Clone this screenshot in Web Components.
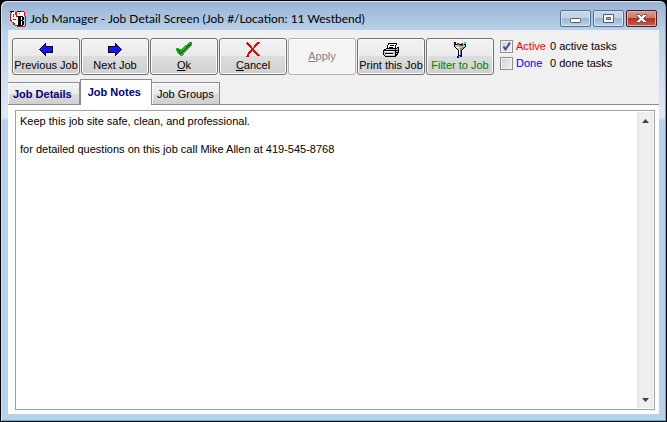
<!DOCTYPE html>
<html lang="en">
<head>
<meta charset="utf-8">
<title>Job Manager</title>
<style>
    body {
        margin: 0;
        background: #000;
        font: 11px/14px "Liberation Sans", Arial, sans-serif;
        color: #000;
    }
    .red { color: #f00; }
    .blue { color: #00f; }
    .green { color: #008000; }
</style>
</head>
<body>
<app-window>
    <svg slot="icon" width="16" height="16" viewBox="0 0 16 16" shape-rendering="crispEdges" aria-hidden="true">
        <path fill="#fff" d="M1 1h13v14H5V12H1z"/>
        <path fill="#f00000" d="M0 2h1v8H0zM1 9h1v2H1zM2 11h2v1H2zM3 12h2v2H3zM5 14h3v1H5zM7 15h8v1H7zM15 5h1v10h-1zM11 0h3v1h-3zM14 1h1v4h-1zM5 1h2v3H5zM3 3h1v3H3zM6 4h1v2H6zM9 2h1v1H9zM3 8h3v1H3z"/>
        <path fill="#000" d="M0 0h4v1H0zM1 1h1v1H1zM7 0h4v1H7z"/>
        <path fill="#000" fill-rule="evenodd" d="M7 5h6v1h1v3h-1v1h1v4h-1v1H7v-1h1V6H7zM11 6v3h1V6zM11 10v4h1v-4z"/>
    </svg>
    <span slot="title">Job Manager - Job Detail Screen (Job #/Location: 11 Westbend)</span>

    <job-toolbar>
        <tool-button>
            <svg slot="icon" width="16" height="16" viewBox="0 0 16 16" shape-rendering="crispEdges">
                <path fill="#1414ff" stroke="#000" d="M1.5 7.5L7.5 1.5V4.5H14.5V10.5H7.5V13.5z"/>
            </svg>
            Previous Job
        </tool-button>
        <tool-button>
            <svg slot="icon" width="16" height="16" viewBox="0 0 16 16" shape-rendering="crispEdges">
                <path fill="#1414ff" stroke="#000" d="M14.5 7.5L8.5 1.5V4.5H1.5V10.5H8.5V13.5z"/>
            </svg>
            Next Job
        </tool-button>
        <tool-button>
            <svg slot="icon" width="16" height="16" viewBox="0 0 16 16" shape-rendering="crispEdges">
                <path fill="#808080" d="M2 9L5 7L14 0H16V3L8 12L6 14H4L2 12z"/>
                <path fill="#008000" d="M0 6H3L5 9L12 1L15 0V2L6 12H3L1 9z"/>
                <path fill="none" stroke="#00d800" d="M3.5 12.5L.5 8.5V6.5H2.5L5.5 9.5L11.5 2.5L14.5 .5"/>
            </svg>
            <u>O</u>k
        </tool-button>
        <tool-button>
            <svg slot="icon" width="16" height="16" viewBox="0 0 16 16" shape-rendering="crispEdges">
                <path fill="none" stroke="#f00000" stroke-width="2" d="M2 1L5 4L8 8L12 12L14 14M14 0L11 3L7 8L4 11L2 15"/>
                <path fill="#f00000" d="M1 1h3v1H1zM2 13h2v2H2zM13 13h2v1h-2z"/>
            </svg>
            <u>C</u>ancel
        </tool-button>
        <tool-button disabled><u>A</u>pply</tool-button>
        <tool-button>
            <svg slot="icon" width="16" height="16" viewBox="0 0 16 16" shape-rendering="crispEdges">
                <path fill="#fff" stroke="#000" d="M5.5 1.5H13.5L11.5 7.5H3.5z"/>
                <path fill="#000" d="M7 3h4v1H7zM6 5h4v1H6z"/>
                <path fill="#c0c0c0" stroke="#000" d="M.5 8.5L3.5 6.5H12.5L15.5 5.5V10.5L12.5 14.5H2.5L.5 12.5z"/>
                <path fill="#000" d="M1 8h11v1H1zM12 7h1v7h-1zM2 11h8v1H2zM13 8h2v1h-2zM13 10h2v1h-2z"/>
                <path fill="#fff" d="M2 9h9v1H2zM3 12h8v1H3z"/>
            </svg>
            Print this Job
        </tool-button>
        <tool-button>
            <svg slot="icon" width="16" height="16" viewBox="0 0 16 16" shape-rendering="crispEdges">
                <path fill="#c0c0c0" stroke="#000" d="M2.5 2.5H13.5V4.5L9.5 8.5V13.5H6.5V8.5L2.5 4.5z"/>
                <path fill="#fff" d="M4 5h3v1H4zM7 7h1v6H7z"/>
                <path fill="#808080" d="M10 5h2v1h-2zM8 6h2v2H8zM8 8h1v5H8z"/>
                <path fill="#f00" d="M5 1h2v2H5zM9 3h2v1H9z"/>
                <path fill="#00c000" d="M7 3h2v1H7zM9 1h2v1H9z"/>
                <path fill="#ffe000" d="M4 3h1v1H4zM11 2h1v1h-1z"/>
                <path fill="#0000e0" d="M2 0h2v2H2zM8 13h2v2H8zM5 14h2v2H5z"/>
                <path fill="#00e0f0" d="M12 0h2v2h-2z"/>
            </svg>
            <span class="green">Filter to Job</span>
        </tool-button>
        <task-filter slot="filters" checked>
            <span slot="label" class="red">Active</span>0 active tasks
        </task-filter>
        <task-filter slot="filters">
            <span slot="label" class="blue">Done</span>0 done tasks
        </task-filter>
    </job-toolbar>

    <job-tabs>
        <job-tab slot="tabs" filled>Job Details</job-tab>
        <job-tab slot="tabs" filled selected>Job Notes</job-tab>
        <job-tab slot="tabs">Job Groups</job-tab>
        <job-notes>Keep this job site safe, clean, and professional.

for detailed questions on this job call Mike Allen at 419-545-8768</job-notes>
    </job-tabs>
</app-window>

<script>
class AppWindow extends HTMLElement {
    constructor() {
        super();
        this.attachShadow({ mode: 'open' });
        this.shadowRoot.innerHTML = `
            <style>
                :host {
                    display: flex;
                    flex-direction: column;
                    box-sizing: border-box;
                    min-height: 100vh;
                    padding: 1px 7px 7px;
                    border: 1px solid #000;
                    border-radius: 7px 7px 0 0;
                    box-shadow: inset 1px 1px #d4e2f2, inset -1px -1px #2fc8e0;
                    background: linear-gradient(#98b3d3, #b9d1ea 30px, #dfeaf6 116px, #b9d1ea 120px);
                }
                header {
                    display: flex;
                    align-items: center;
                    height: 28px;
                    gap: 4px;
                }
                .title {
                    display: flex;
                    align-items: center;
                    flex: 1;
                    gap: 4px;
                    padding: 5px 0 0 2px;
                    font: 12px/16px Lato, "Open Sans", sans-serif;
                    white-space: nowrap;
                }
                h1 {
                    margin: 0;
                    font: inherit;
                }
                .controls {
                    display: flex;
                    gap: 2px;
                    padding: 5px 2px 0 0;
                }
                button {
                    display: grid;
                    place-items: center;
                    width: 31px;
                    height: 17px;
                    padding: 0;
                    border: 1px solid #55708f;
                    border-radius: 2px;
                    box-shadow: inset 0 0 0 1px #d5e3f2;
                    background: linear-gradient(#c2d4e9 50%, #9db7d4 50%, #b9d0ea);
                }
                .close {
                    border-color: #501a22;
                    box-shadow: inset 0 0 0 1px #e5aaa0;
                    background: linear-gradient(#dc9a8e, #cf7565 50%, #b6301c 50%, #cc5a42);
                }
                main {
                    display: flex;
                    flex-direction: column;
                    flex: 1;
                    background: #f0f0f0;
                }
            </style>
            <header>
                <div class="title"><slot name="icon"></slot><h1><slot name="title"></slot></h1></div>
                <div class="controls">
                    <button type="button" aria-label="Minimize">
                        <svg width="13" height="11" viewBox="0 0 13 11"><rect x="1.5" y="5.5" width="10" height="4" rx="1" fill="#fff" stroke="#565a68"/></svg>
                    </button>
                    <button type="button" aria-label="Maximize">
                        <svg width="13" height="11" viewBox="0 0 13 11"><path fill="#fff" fill-rule="evenodd" stroke="#565a68" d="M1.5 1.5h10v8h-10zM4.5 4.5h4v2h-4z"/></svg>
                    </button>
                    <button type="button" class="close" aria-label="Close">
                        <svg width="13" height="11" viewBox="0 0 13 11"><path fill="#fff" stroke="#565a68" d="M1.5 1.5H4.5L6.5 3.5L8.5 1.5H11.5V2.5L8.5 5.5L11.5 8.5V9.5H8.5L6.5 7.5L4.5 9.5H1.5V8.5L4.5 5.5L1.5 2.5z"/></svg>
                    </button>
                </div>
            </header>
            <main><slot></slot></main>
        `;
    }
}

class JobToolbar extends HTMLElement {
    constructor() {
        super();
        this.attachShadow({ mode: 'open' });
        this.shadowRoot.innerHTML = `
            <style>
                :host {
                    display: flex;
                    gap: 6px;
                    padding: 8px 4px 4px;
                }
                .buttons {
                    display: flex;
                    gap: 1px;
                }
                .filters {
                    display: flex;
                    flex-direction: column;
                    gap: 3px;
                    padding-top: 1px;
                }
            </style>
            <div class="buttons"><slot></slot></div>
            <div class="filters"><slot name="filters"></slot></div>
        `;
    }
}

class ToolButton extends HTMLElement {
    constructor() {
        super();
        this.attachShadow({ mode: 'open' });
        this.shadowRoot.innerHTML = `
            <style>
                :host { display: block; }
                button {
                    display: flex;
                    flex-direction: column;
                    align-items: center;
                    justify-content: center;
                    width: 68px;
                    height: 37px;
                    padding: 1px 0 0;
                    border: 1px solid #707070;
                    border-radius: 3px;
                    box-shadow: inset 0 0 0 1px #fbfbfb;
                    background: linear-gradient(#f2f2f2, #ebebeb 50%, #dddddd 50%, #cfcfcf);
                    font: inherit;
                    color: #000;
                    white-space: nowrap;
                }
                button:disabled {
                    padding-bottom: 2px;
                    border-color: #adb2b5;
                    background: #f4f4f4;
                    color: #838383;
                }
            </style>
            <button type="button"><slot name="icon"></slot><span><slot></slot></span></button>
        `;
    }

    connectedCallback() {
        this.shadowRoot.querySelector('button').disabled = this.hasAttribute('disabled');
    }
}

class TaskFilter extends HTMLElement {
    constructor() {
        super();
        this.attachShadow({ mode: 'open' });
        this.shadowRoot.innerHTML = `
            <style>
                :host {
                    display: flex;
                    white-space: nowrap;
                }
                label {
                    display: flex;
                    align-items: center;
                    gap: 3px;
                    width: 50px;
                }
                input {
                    appearance: none;
                    width: 13px;
                    height: 13px;
                    margin: 0;
                    border: 1px solid #8e8f8f;
                    box-shadow: inset 0 0 0 1px #f4f4f4;
                    background: linear-gradient(135deg, #cdd1d6, #f3f3f3);
                }
                input:checked {
                    background:
                        url('data:image/svg+xml,<svg xmlns="http://www.w3.org/2000/svg" width="11" height="11"><path d="M2.5 5.5L4.5 8.5L9 1.5" fill="none" stroke="%233a4f94" stroke-width="2"/></svg>'),
                        linear-gradient(135deg, #cdd1d6, #f3f3f3);
                }
            </style>
            <label><input type="checkbox"><slot name="label"></slot></label>
            <span><slot></slot></span>
        `;
    }

    connectedCallback() {
        this.shadowRoot.querySelector('input').checked = this.hasAttribute('checked');
    }
}

class JobTabs extends HTMLElement {
    constructor() {
        super();
        this.attachShadow({ mode: 'open' });
        this.shadowRoot.innerHTML = `
            <style>
                :host {
                    display: flex;
                    flex-direction: column;
                    flex: 1;
                }
                .strip {
                    display: flex;
                    align-items: flex-end;
                    height: 25px;
                    border-bottom: 1px solid #898c95;
                }
                .panel {
                    display: flex;
                    flex: 1;
                    padding: 5px 4px 4px 7px;
                    background: #fff;
                }
            </style>
            <div class="strip" role="tablist"><slot name="tabs"></slot></div>
            <div class="panel" role="tabpanel"><slot></slot></div>
        `;
    }
}

class JobTab extends HTMLElement {
    constructor() {
        super();
        this.attachShadow({ mode: 'open' });
        this.shadowRoot.innerHTML = `
            <style>
                :host { display: block; }
                :host([selected]) { margin-bottom: -1px; }
                button {
                    display: block;
                    height: 22px;
                    padding: 0 5px;
                    border: 1px solid #898c95;
                    border-width: 1px 1px 0 0;
                    box-shadow: inset 1px 1px #fbfbfb;
                    background: linear-gradient(#f2f2f2, #ebebeb 50%, #dddddd 50%, #cfcfcf);
                    font: inherit;
                    color: #000;
                    white-space: nowrap;
                }
                :host([filled]) button {
                    padding-right: 7px;
                    font-weight: bold;
                    color: #000080;
                }
                :host([selected]) button {
                    height: 26px;
                    padding: 0 10px 2px 7px;
                    border-left-width: 1px;
                    background: #fff;
                }
            </style>
            <button type="button" role="tab"><slot></slot></button>
        `;
    }

    connectedCallback() {
        this.shadowRoot.querySelector('button').setAttribute('aria-selected', this.hasAttribute('selected'));
    }
}

class JobNotes extends HTMLElement {
    constructor() {
        super();
        this.attachShadow({ mode: 'open' });
        this.shadowRoot.innerHTML = `
            <style>
                :host {
                    display: flex;
                    flex: 1;
                    border: 1px solid #a0a0a6;
                    background: #fff;
                }
                textarea {
                    flex: 1;
                    min-width: 0;
                    padding: 3px 4px;
                    border: 0;
                    outline: 0;
                    resize: none;
                    background: #fff;
                    font: inherit;
                    color: #000;
                    overflow: hidden;
                }
                .scrollbar {
                    display: flex;
                    flex-direction: column;
                    justify-content: space-between;
                    width: 16px;
                    margin: 1px;
                    background: linear-gradient(90deg, #e3e3e3, #efefef 3px, #efefef 13px, #e6e6e6);
                }
                button {
                    display: grid;
                    place-items: center;
                    height: 17px;
                    padding: 0;
                    border: 0;
                    background: none;
                }
            </style>
            <textarea aria-label="Job Notes" spellcheck="false"></textarea>
            <div class="scrollbar">
                <button type="button" aria-label="Scroll up">
                    <svg width="7" height="4" viewBox="0 0 7 4"><path fill="#404040" d="M0 4L3.5 0L7 4z"/></svg>
                </button>
                <button type="button" aria-label="Scroll down">
                    <svg width="7" height="4" viewBox="0 0 7 4"><path fill="#404040" d="M0 0L3.5 4L7 0z"/></svg>
                </button>
            </div>
        `;
        this._input = this.shadowRoot.querySelector('textarea');
    }

    connectedCallback() {
        this._input.value = this.textContent;
    }
}

customElements.define('app-window', AppWindow);
customElements.define('job-toolbar', JobToolbar);
customElements.define('tool-button', ToolButton);
customElements.define('task-filter', TaskFilter);
customElements.define('job-tabs', JobTabs);
customElements.define('job-tab', JobTab);
customElements.define('job-notes', JobNotes);
</script>
</body>
</html>
